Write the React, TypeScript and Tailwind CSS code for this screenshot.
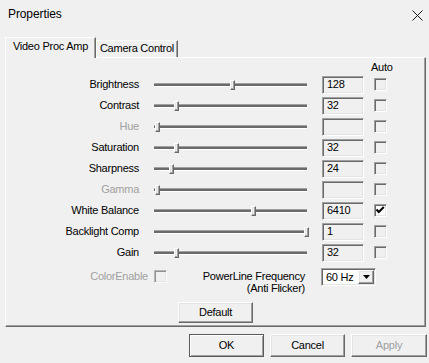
import React from "react";

const font = { fontFamily: '"Liberation Sans", Arial, sans-serif' };

const sunken =
  "border border-t-[#a0a0a0] border-l-[#a0a0a0] border-r-white border-b-white shadow-[inset_1px_1px_0_#696969,inset_-1px_-1px_0_#e3e3e3]";
const raised =
  "border border-t-white border-l-white border-r-[#696969] border-b-[#696969] shadow-[inset_-1px_-1px_0_#a0a0a0,inset_1px_1px_0_#e3e3e3]";

type RowProps = {
  label: string;
  disabled?: boolean;
  thumb: number;
  value?: string;
  checked?: boolean;
};

function CheckBox({ checked, disabled }: { checked?: boolean; disabled?: boolean }) {
  return (
    <div
      className={`h-[13px] w-[13px] shrink-0 ${sunken} ${checked ? "bg-white" : "bg-[#f0f0f0]"} ${
        disabled ? "opacity-70" : ""
      }`}
    >
      {checked && (
        <svg width="11" height="11" viewBox="0 0 11 11" className="block">
          <polyline points="1.5,4.5 3.8,7 8.8,2" fill="none" stroke="#000" strokeWidth="2" />
        </svg>
      )}
    </div>
  );
}

function Row({ label, disabled, thumb, value, checked }: RowProps) {
  return (
    <div className="flex h-[21px] items-center">
      <div
        className={`w-[133px] shrink-0 pb-[1px] text-right leading-[13px] ${
          disabled ? "text-[#a0a0a0]" : "text-black"
        }`}
      >
        {label}
      </div>
      <div className="relative ml-[15px] flex h-[10px] w-[153px] shrink-0 items-center">
        <div className="h-[4px] w-full border-t border-b border-t-[#a0a0a0] border-b-white bg-[#6a6a6a]" />
        <div
          className={`absolute top-0 h-[10px] w-[5px] bg-[#f0f0f0] ${raised}`}
          style={{ left: thumb }}
        />
      </div>
      <div className={`ml-[15px] flex h-[18px] w-[42px] shrink-0 items-center bg-[#f0f0f0] pl-[4px] ${sunken}`}>
        <span className="leading-[13px] text-black">{value}</span>
      </div>
      <div className="ml-[10px]">
        <CheckBox checked={checked} />
      </div>
    </div>
  );
}

export default function App() {
  const rows: RowProps[] = [
    { label: "Brightness", thumb: 76, value: "128" },
    { label: "Contrast", thumb: 20, value: "32" },
    { label: "Hue", thumb: 1, disabled: true, value: "" },
    { label: "Saturation", thumb: 20, value: "32" },
    { label: "Sharpness", thumb: 15, value: "24" },
    { label: "Gamma", thumb: 1, disabled: true, value: "" },
    { label: "White Balance", thumb: 97, value: "6410", checked: true },
    { label: "Backlight Comp", thumb: 150, value: "1" },
    { label: "Gain", thumb: 20, value: "32" },
  ];

  return (
    <div
      className="flex h-[363px] w-[429px] flex-col overflow-hidden bg-[#f0f0f0] text-[11px] tracking-[-0.25px] text-black"
      style={font}
    >
      {/* Title bar */}
      <div className="flex h-[28px] shrink-0 items-center justify-between pl-[8px] pr-[6px]">
        <span className="pb-[1px] text-[12px] tracking-[-0.1px]">Properties</span>
        <svg width="11" height="11" viewBox="0 0 11 11" className="mt-[2px]">
          <path d="M0.5 0.5 L10.5 10.5 M10.5 0.5 L0.5 10.5" stroke="#1a1a1a" strokeWidth="1" />
        </svg>
      </div>

      {/* Tabs */}
      <div className="ml-[5px] flex h-[29px] shrink-0 items-end">
        <div className="relative z-10 mb-[-1px] flex h-[21px] w-[91px] items-center justify-center border-l border-t border-r border-l-white border-t-white border-r-[#696969] bg-[#f0f0f0] pb-[3px] shadow-[inset_-1px_0_0_#a0a0a0]">
          Video Proc Amp
        </div>
        <div className="flex h-[17px] w-[82px] items-center justify-center border-t border-r border-l border-l-white border-t-white border-r-[#696969] pb-[1px] shadow-[inset_-1px_0_0_#a0a0a0]">
          Camera Control
        </div>
      </div>

      {/* Panel */}
      <div className="ml-[5px] flex h-[270px] w-[421px] shrink-0 flex-col border border-l-white border-t-white border-r-[#696969] border-b-[#696969] pt-[2px] shadow-[inset_-1px_-1px_0_#a0a0a0]">
        <div className="h-[14px] pl-[365px] leading-[14px]">Auto</div>
        {rows.map((r) => (
          <Row key={r.label} {...r} />
        ))}

        {/* Bottom controls */}
        <div className="mt-[5px] flex items-start">
          <div className="mt-[2px] w-[142px] shrink-0 text-right leading-[13px] text-[#a0a0a0]">ColorEnable</div>
          <div className="ml-[6px] mt-[2px]">
            <CheckBox disabled />
          </div>
          <div className="mt-[2px] w-[138px] shrink-0 text-right leading-[12px]">
            <div>PowerLine Frequency</div>
            <div>(Anti Flicker)</div>
          </div>
          <div className={`ml-[16px] flex h-[18px] w-[55px] shrink-0 items-center bg-white p-[1px] ${sunken}`}>
            <span className="flex-1 pl-[3px] leading-[13px]">60 Hz</span>
            <div className={`flex h-[14px] w-[16px] items-center justify-center bg-[#f0f0f0] ${raised}`}>
              <svg width="7" height="4" viewBox="0 0 7 4">
                <polygon points="0,0 7,0 3.5,4" fill="#000" />
              </svg>
            </div>
          </div>
        </div>

        <div className="mt-[8px] pl-[172px]">
          <div className={`flex h-[21px] w-[75px] items-center justify-center bg-[#f0f0f0] ${raised}`}>Default</div>
        </div>
      </div>

      {/* Buttons */}
      <div className="ml-[189px] mt-[7px] flex gap-[6px]">
        <div className="flex h-[23px] w-[75px] items-center justify-center border border-[#5a5a5a] bg-[#f0f0f0] shadow-[inset_1px_1px_0_#ffffff,inset_-1px_-1px_0_#a0a0a0]">
          OK
        </div>
        <div className={`flex h-[23px] w-[75px] items-center justify-center bg-[#f0f0f0] ${raised}`}>Cancel</div>
        <div className={`flex h-[23px] w-[76px] items-center justify-center bg-[#f0f0f0] text-[#a0a0a0] ${raised}`}>
          Apply
        </div>
      </div>
    </div>
  );
}
